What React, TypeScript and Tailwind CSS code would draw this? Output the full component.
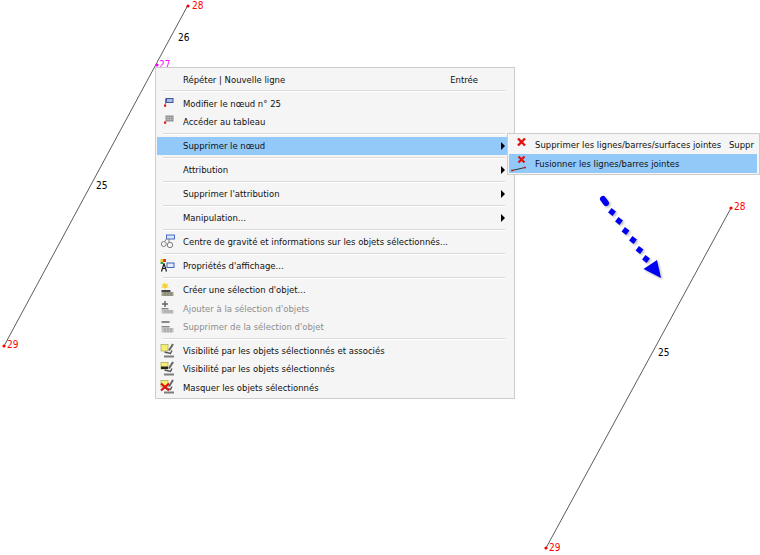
import React from "react";

type Row = {
  label?: string;
  icon?: React.ReactNode;
  hint?: string;
  arrow?: boolean;
  active?: boolean;
  disabled?: boolean;
  sep?: boolean;
};

const Svg = ({ children }: { children: React.ReactNode }) => (
  <svg width="18" height="18" viewBox="0 0 18 18" className="shrink-0">
    {children}
  </svg>
);

const FlagIcon = () => (
  <Svg>
    <rect x="6.500" y="3.500" width="6.500" height="4" fill="#a9bde6" stroke="#34478f" strokeWidth="0.900" />
    <path d="M5.500 3.500v6" stroke="#777" />
    <rect x="4" y="9.500" width="2.200" height="2.200" fill="#e01010" />
  </Svg>
);

const TableIcon = () => (
  <Svg>
    <rect x="5.500" y="2.500" width="8" height="6" fill="#8c8c8c" />
    <path d="M8 2.500v6M10.500 2.500v6M5.500 4.500h8M5.500 6.500h8" stroke="#c4c4c4" strokeWidth="0.600" />
    <rect x="4" y="8.500" width="2.200" height="2.200" fill="#e01010" />
  </Svg>
);

const GravityIcon = () => (
  <Svg>
    <rect x="6.500" y="2" width="8" height="4" fill="#dbe6fa" stroke="#3a5cc0" strokeWidth="0.900" />
    <circle cx="3.800" cy="11" r="2.500" fill="none" stroke="#808080" />
    <circle cx="10" cy="12" r="2.700" fill="none" stroke="#808080" />
    <path d="M5 8l2-3M9 9V6" stroke="#808080" />
  </Svg>
);

const DisplayIcon = () => (
  <Svg>
    <rect x="0.500" y="2" width="2.700" height="3" fill="#e8c818" />
    <rect x="3.200" y="2" width="2.700" height="3" fill="#d03020" />
    <rect x="0.500" y="5" width="2.700" height="2" fill="#30a040" />
    <path d="M4 6.500l-2.500 8M4 6.500l2.500 8M2.500 11.500h3" stroke="#222" strokeWidth="1.200" fill="none" />
    <rect x="7" y="6" width="7" height="4.500" fill="#e4ecfa" stroke="#2c54b8" strokeWidth="0.900" />
  </Svg>
);

const CreateIcon = () => (
  <Svg>
    <path d="M4.500 1l1 2.500 3-1-1.500 2.500 2 2-3-.5L5 9 4 6.500 1 7l2-2-2-2 2.500.5z" fill="#f2d230" />
    <rect x="1.500" y="9" width="9" height="2" fill="#444" />
    <rect x="1.500" y="11" width="12" height="4" fill="#a3a38c" />
    <path d="M5 11v4M8 11v4M11 11v4" stroke="#666" strokeWidth="0.700" />
  </Svg>
);

const AddIcon = () => (
  <Svg>
    <path d="M5 2v6M2 5h6" stroke="#666" strokeWidth="1.500" />
    <rect x="1.500" y="9" width="7" height="1.500" fill="#888" />
    <rect x="1.500" y="11" width="12" height="3.500" fill="#c2c2c2" />
    <path d="M5 11v3.500M8 11v3.500M11 11v3.500" stroke="#8c8c8c" strokeWidth="0.700" />
  </Svg>
);

const RemoveIcon = () => (
  <Svg>
    <path d="M1.500 4h8" stroke="#666" strokeWidth="1.500" />
    <rect x="1.500" y="8" width="8" height="1.500" fill="#888" />
    <rect x="1.500" y="10" width="12" height="4.500" fill="#c2c2c2" />
    <path d="M5 10v4.500M8 10v4.500M11 10v4.500" stroke="#8c8c8c" strokeWidth="0.700" />
  </Svg>
);

const EyeIcon = ({ band, cross }: { band?: boolean; cross?: boolean }) => (
  <Svg>
    <rect x="1" y="2.500" width="7" height="6.500" fill="#f6ee70" stroke="#a8a850" strokeWidth="0.700" />
    {band && <rect x="1" y="6.500" width="7" height="2.500" fill="#222" />}
    <path d="M13 2L9 8.500" stroke="#666" strokeWidth="2" />
    <path d="M4.500 10l6 1.500 1.500-3" fill="none" stroke="#555" strokeWidth="1.400" />
    <path d="M4 14.500h10" stroke="#7d7d7d" strokeWidth="2" />
    {cross && <path d="M1 5.500l8 7M9 5.500l-8 7" stroke="#e01010" strokeWidth="2.200" />}
  </Svg>
);

const CrossIcon = () => (
  <Svg>
    <path d="M9 2.500l7 7M16 2.500l-7 7" stroke="#e01010" strokeWidth="2.400" />
  </Svg>
);

const MergeIcon = () => (
  <Svg>
    <path d="M9.500 1.500l6 6M15.500 1.500l-6 6" stroke="#e01010" strokeWidth="2.200" />
    <path d="M3 15.500l13-3" stroke="#333" />
    <circle cx="3" cy="15.500" r="1" fill="#e01010" />
    <circle cx="16" cy="12.500" r="1" fill="#e01010" />
  </Svg>
);

const rows: Row[] = [
  { label: "Répéter | Nouvelle ligne", hint: "Entrée" },
  { sep: true },
  { label: "Modifier le nœud n° 25", icon: <FlagIcon /> },
  { label: "Accéder au tableau", icon: <TableIcon /> },
  { sep: true },
  { label: "Supprimer le nœud", arrow: true, active: true },
  { sep: true },
  { label: "Attribution", arrow: true },
  { sep: true },
  { label: "Supprimer l'attribution", arrow: true },
  { sep: true },
  { label: "Manipulation...", arrow: true },
  { sep: true },
  { label: "Centre de gravité et informations sur les objets sélectionnés...", icon: <GravityIcon /> },
  { sep: true },
  { label: "Propriétés d'affichage...", icon: <DisplayIcon /> },
  { sep: true },
  { label: "Créer une sélection d'objet...", icon: <CreateIcon /> },
  { label: "Ajouter à la sélection d'objets", icon: <AddIcon />, disabled: true },
  { label: "Supprimer de la sélection d'objet", icon: <RemoveIcon />, disabled: true },
  { sep: true },
  { label: "Visibilité par les objets sélectionnés et associés", icon: <EyeIcon /> },
  { label: "Visibilité par les objets sélectionnés", icon: <EyeIcon band /> },
  { label: "Masquer les objets sélectionnés", icon: <EyeIcon cross /> },
];

const Caret = () => <span className="ml-auto mr-[9px] h-0 w-0 border-y-[4px] border-l-[4px] border-y-transparent border-l-black" />;

function MenuRow({ row }: { row: Row }) {
  if (row.sep) {
    return (
      <div className="flex h-[5.700px] items-center pl-[6px] pr-[9px]">
        <div className="h-[2px] w-full border-b border-white bg-[#d9d9d9]" />
      </div>
    );
  }
  return (
    <div
      className={`flex h-[18.350px] items-center ${row.active ? "bg-[#92c9f9]" : ""} ${row.disabled ? "text-[#8d8d8d]" : "text-[#111]"}`}
    >
      <div className="flex w-[26px] shrink-0 pl-[3px]">{row.icon}</div>
      <span className="whitespace-nowrap">{row.label}</span>
      {row.hint && <span className="ml-auto mr-[36px]">{row.hint}</span>}
      {row.arrow && <Caret />}
    </div>
  );
}

function Node({ className, children }: { className: string; children: React.ReactNode }) {
  return <span className={`absolute text-[10px] leading-none ${className}`}>{children}</span>;
}

function Drawing() {
  const arrow = (
    <>
      <path d="M603 199l3 4" strokeWidth="6" strokeLinecap="round" stroke="currentColor" />
      {[[612, 212], [619, 221], [625.500, 231], [633, 240], [639.500, 250], [646, 259]].map(([x, y]) => (
        <rect key={x} x={x - 2.800} y={y - 2.800} width="5.600" height="5.600" fill="currentColor" transform={`rotate(37 ${x} ${y})`} />
      ))}
      <path d="M643.500 269L657 260L661 278Z" fill="currentColor" />
    </>
  );
  return (
    <svg width="760" height="555" viewBox="0 0 760 555" className="absolute left-0 top-0">
      <path d="M188 5L4 346" stroke="#4a4a4a" strokeWidth="0.900" />
      <path d="M731 208L546 548" stroke="#4a4a4a" strokeWidth="0.900" />
      <circle cx="188" cy="6" r="1.600" fill="#f00" />
      <circle cx="157" cy="65" r="1.600" fill="#f0f" />
      <circle cx="4" cy="346" r="1.600" fill="#f00" />
      <circle cx="731" cy="208" r="1.600" fill="#f00" />
      <circle cx="546" cy="548" r="1.600" fill="#f00" />
      <g transform="translate(1.500 1.500)" className="text-black/25 blur-[1px]">{arrow}</g>
      <g className="text-[#0000f0]">{arrow}</g>
    </svg>
  );
}

export default function App() {
  return (
    <div className="relative h-[555px] w-[760px] overflow-hidden bg-white font-['DejaVu_Sans_Condensed','DejaVu_Sans',sans-serif]">
      <Drawing />
      <Node className="left-[192px] top-[1px] text-[#f00]">28</Node>
      <Node className="left-[178px] top-[33px] text-black">26</Node>
      <Node className="left-[159px] top-[60px] text-[#f0f]">27</Node>
      <Node className="left-[96px] top-[181px] text-black">25</Node>
      <Node className="left-[7px] top-[340px] text-[#f00]">29</Node>
      <Node className="left-[734px] top-[202px] text-[#f00]">28</Node>
      <Node className="left-[658px] top-[348px] text-black">25</Node>
      <Node className="left-[549px] top-[543px] text-[#f00]">29</Node>

      <div className="absolute left-[155px] top-[67px] h-[332px] w-[360px] border border-[#cdcdcd] bg-[#f5f5f5] pl-px pt-[2.300px] text-[9.450px] leading-none">
        {rows.map((row, i) => (
          <MenuRow key={i} row={row} />
        ))}
      </div>

      <div className="absolute left-[507px] top-[133px] h-[42px] w-[253px] border border-[#cdcdcd] bg-[#f5f5f5] py-[2px] pl-px pr-[2px] text-[9.450px] leading-none text-[#111]">
        <div className="flex h-[18.400px] items-center">
          <div className="w-[26px] shrink-0"><CrossIcon /></div>
          <span className="whitespace-nowrap">Supprimer les lignes/barres/surfaces jointes</span>
          <span className="ml-auto mr-[3px]">Suppr</span>
        </div>
        <div className="flex h-[18.400px] items-center bg-[#92c9f9]">
          <div className="w-[26px] shrink-0"><MergeIcon /></div>
          <span className="whitespace-nowrap">Fusionner les lignes/barres jointes</span>
        </div>
      </div>
    </div>
  );
}
